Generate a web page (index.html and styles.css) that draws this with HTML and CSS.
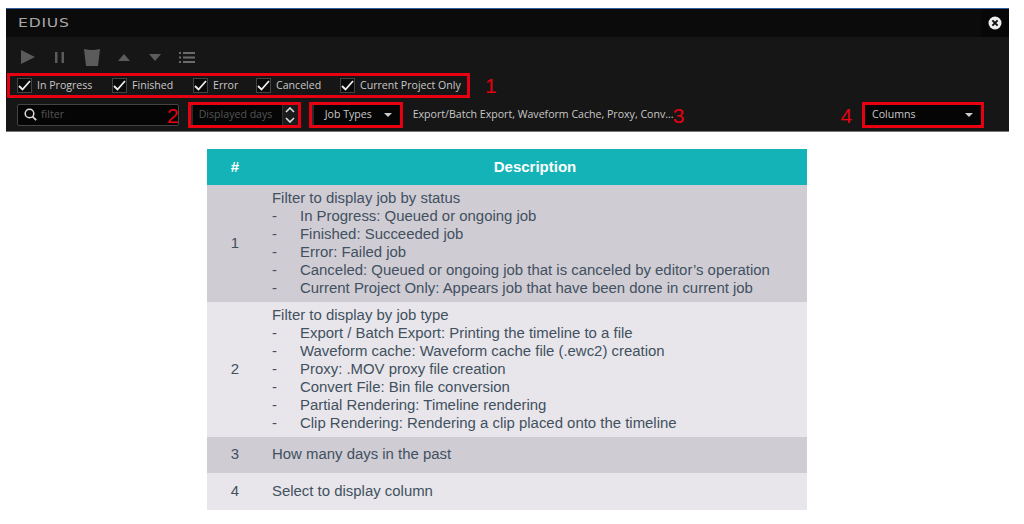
FILE: index.html
```html
<!DOCTYPE html>
<html lang="en">
<head>
<meta charset="utf-8">
<title>EDIUS job filters</title>
<link rel="stylesheet" href="styles.css">
</head>
<body>
<section class="panel">
  <header class="titlebar">
    <span class="logo">EDIUS</span>
    <span class="close">
      <svg width="14" height="14" viewBox="0 0 14 14"><circle cx="7" cy="7" r="6.5" fill="#eee"/><path d="M4.4 4.4l5.2 5.2M9.6 4.4l-5.2 5.2" stroke="#111" stroke-width="2"/></svg>
    </span>
  </header>
  <div class="toolbar">
    <svg class="t-play" width="14" height="14" viewBox="0 0 14 14"><path d="M0 0l14 7-14 7z" fill="#5b5b5b"/></svg>
    <svg class="t-pause" width="9" height="11" viewBox="0 0 9 11"><path d="M0 0h2.500v11H0zM6.500 0H9v11H6.500z" fill="#5b5b5b"/></svg>
    <svg class="t-trash" width="16" height="17" viewBox="0 0 16 17"><path d="M0 0q8 2 16 0l-2 17H2z" fill="#5b5b5b"/></svg>
    <svg class="t-up" width="12" height="7" viewBox="0 0 12 7"><path d="M6 0l6 7H0z" fill="#5b5b5b"/></svg>
    <svg class="t-down" width="12" height="7" viewBox="0 0 12 7"><path d="M0 0h12L6 7z" fill="#5b5b5b"/></svg>
    <svg class="t-list" width="16" height="11" viewBox="0 0 16 11"><path d="M0 0h2v2H0zM4 0h12v2H4zM0 4.500h2v2H0zM4 4.500h12v2H4zM0 9h2v2H0zM4 9h12v2H4z" fill="#6a6a6a"/></svg>
  </div>
  <div class="status-row">
    <div class="status-box">
      <label class="check c1"><span class="box"><svg width="13" height="11" viewBox="0 0 13 11"><path d="M1 6l3.500 3.500L12 1" fill="none" stroke="#eee" stroke-width="1.800"/></svg></span>In Progress</label>
      <label class="check c2"><span class="box"><svg width="13" height="11" viewBox="0 0 13 11"><path d="M1 6l3.500 3.500L12 1" fill="none" stroke="#eee" stroke-width="1.800"/></svg></span>Finished</label>
      <label class="check c3"><span class="box"><svg width="13" height="11" viewBox="0 0 13 11"><path d="M1 6l3.500 3.500L12 1" fill="none" stroke="#eee" stroke-width="1.800"/></svg></span>Error</label>
      <label class="check c4"><span class="box"><svg width="13" height="11" viewBox="0 0 13 11"><path d="M1 6l3.500 3.500L12 1" fill="none" stroke="#eee" stroke-width="1.800"/></svg></span>Canceled</label>
      <label class="check"><span class="box"><svg width="13" height="11" viewBox="0 0 13 11"><path d="M1 6l3.500 3.500L12 1" fill="none" stroke="#eee" stroke-width="1.800"/></svg></span>Current Project Only</label>
    </div>
    <span class="mark mark-1">1</span>
  </div>
  <div class="filter-row">
    <div class="search">
      <svg width="13" height="13" viewBox="0 0 13 13"><circle cx="5.500" cy="5.500" r="4.300" fill="none" stroke="#ddd" stroke-width="1.500"/><path d="M8.600 8.600l3.600 3.600" stroke="#ddd" stroke-width="1.700"/></svg>
      <span>filter</span>
    </div>
    <span class="mark mark-2">2</span>
    <div class="red days">
      <span class="days-label">Displayed days</span>
      <span class="spin">
        <svg width="10" height="6" viewBox="0 0 10 6"><path d="M1 5l4-4 4 4" fill="none" stroke="#ddd" stroke-width="1.600"/></svg>
        <svg width="10" height="6" viewBox="0 0 10 6"><path d="M1 1l4 4 4-4" fill="none" stroke="#ddd" stroke-width="1.600"/></svg>
      </span>
    </div>
    <div class="red jobtypes">
      <span>Job Types</span>
      <svg width="8" height="4" viewBox="0 0 8 4"><path d="M0 0h8L4 4z" fill="#ccc"/></svg>
    </div>
    <span class="jobs-text">Export/Batch Export, Waveform Cache, Proxy, Conv...</span>
    <span class="mark mark-3">3</span>
    <span class="mark mark-4">4</span>
    <div class="red columns">
      <span>Columns</span>
      <svg width="8" height="4" viewBox="0 0 8 4"><path d="M0 0h8L4 4z" fill="#ccc"/></svg>
    </div>
  </div>
</section>
<table class="desc">
  <thead>
    <tr><th class="num">#</th><th class="title">Description</th></tr>
  </thead>
  <tbody>
    <tr class="r1">
      <td class="num">1</td>
      <td>
        <div>Filter to display job by status</div>
        <div class="li">In Progress: Queued or ongoing job</div>
        <div class="li">Finished: Succeeded job</div>
        <div class="li">Error: Failed job</div>
        <div class="li">Canceled: Queued or ongoing job that is canceled by editor’s operation</div>
        <div class="li">Current Project Only: Appears job that have been done in current job</div>
      </td>
    </tr>
    <tr class="r2">
      <td class="num">2</td>
      <td>
        <div>Filter to display by job type</div>
        <div class="li">Export / Batch Export: Printing the timeline to a file</div>
        <div class="li">Waveform cache: Waveform cache file (.ewc2) creation</div>
        <div class="li">Proxy: .MOV proxy file creation</div>
        <div class="li">Convert File: Bin file conversion</div>
        <div class="li">Partial Rendering: Timeline rendering</div>
        <div class="li">Clip Rendering: Rendering a clip placed onto the timeline</div>
      </td>
    </tr>
    <tr class="r3"><td class="num">3</td><td>How many days in the past</td></tr>
    <tr class="r4"><td class="num">4</td><td>Select to display column</td></tr>
  </tbody>
</table>
</body>
</html>
```
FILE: styles.css
```css
* { box-sizing: border-box; }
html, body { margin: 0; padding: 0; background: #fff; }
body { padding: 8px 0 0 6px; height: 524px; overflow: hidden; font-family: "Liberation Sans", Arial, sans-serif; }

.panel {
  width: 1003px; height: 124px;
  background: #161616;
  border-top: 1px solid #2f5f9f;
  border-bottom: 1px solid #777;
  font-family: "Open Sans", sans-serif;
  font-size: 10.6px;
  color: #c8c8c8;
}
.titlebar {
  height: 28px; background: #0b0b0b;
  display: flex; align-items: center; justify-content: space-between;
}
.logo {
  margin-left: 12px;
  font-family: "DejaVu Sans", sans-serif;
  font-size: 12px; letter-spacing: .6px; color: #a8a8a8; transform: scaleX(1.3); transform-origin: left;
}
.close { width: 28px; height: 28px; display: flex; align-items: center; justify-content: center; background: #070707; }
.toolbar { height: 36px; display: flex; align-items: center; padding: 4px 0 0 15px; }
.toolbar svg { flex: none; }
.t-pause { margin-left: 20px; }
.t-trash { margin-left: 20px; }
.t-up { margin-left: 18px; }
.t-down { margin-left: 19px; }
.t-list { margin-left: 18px; }

.status-row { display: flex; align-items: center; padding-left: 1px; height: 25px; }
.status-box {
  width: 463px; height: 25px;
  border: 3px solid #e60012;
  display: flex; align-items: center; padding: 0 0 1px 7px;
}
.check { display: flex; align-items: center; }
.c1 { width: 95px; }
.c2 { width: 81px; }
.c3 { width: 63px; }
.c4 { width: 84px; }
.box {
  width: 15px; height: 15px; margin-right: 5px;
  background: #0a0a0a; border: 1px solid #444;
  display: flex; align-items: center; justify-content: center;
}
.mark { color: #e60012; font-family: "Liberation Sans", sans-serif; font-size: 21px; line-height: 1; }
.mark-1 { margin-left: 15px; }

.filter-row { display: flex; align-items: center; height: 26px; margin-top: 4px; padding-left: 11px; }
.search {
  width: 162px; height: 22px;
  background: #050505; border: 1px solid #444; border-radius: 2px;
  display: flex; align-items: center; gap: 4px; padding: 0 0 2px 6px; color: #555;
}
.red { border: 3px solid #e60012; height: 26px; background: #050505; display: flex; align-items: center; }
.mark-2 { margin-left: -12px; position: relative; }
.days { width: 113px; margin-left: 9px; color: #555; justify-content: space-between; padding-left: 8px; box-shadow: inset 2px 0 0 #2a2a2a; }
.days-label { white-space: nowrap; padding-bottom: 2px; }
.spin { width: 16px; height: 100%; display: flex; flex-direction: column; align-items: center; justify-content: space-around; border-left: 1px solid #333; background: #1b1b1b; }
.jobtypes { width: 94px; margin-left: 8px; padding-left: 13px; gap: 12px; color: #c8c8c8; box-shadow: inset 2px 0 0 #2a2a2a; }
.jobtypes span, .columns span { padding-bottom: 2px; }
.jobs-text { margin-left: 10px; width: 258px; white-space: nowrap; padding-bottom: 2px; }
.mark-3 { margin-left: 2px; }
.mark-4 { margin-left: 156px; }
.columns { width: 122px; margin-left: 10px; padding: 0 8px 0 7px; justify-content: space-between; color: #c8c8c8; }

.desc {
  margin: 17px 0 0 201px;
  width: 600px; table-layout: fixed; border-collapse: collapse;
  font-size: 14.93px; line-height: 18px; color: #41515f;
}
.desc th { background: #13b3b7; color: #fff; height: 36px; padding: 0; font-size: 15px; font-weight: 700; }
.desc th.title { padding-right: 9px; }
.desc td { padding: 3px 0 5px 0; vertical-align: middle; }
.desc .num { width: 65px; text-align: center; padding-right: 9px; }
.r1, .r3 { background: #d0ccd4; }
.r2, .r4 { background: #e8e6ea; }
.r1 td { height: 117px; }
.r2 td { height: 135px; }
.r3 td { height: 36px; }
.r4 td { height: 37px; }
.li { position: relative; padding-left: 28px; }
.li::before { content: "-"; position: absolute; left: 0; }
```
